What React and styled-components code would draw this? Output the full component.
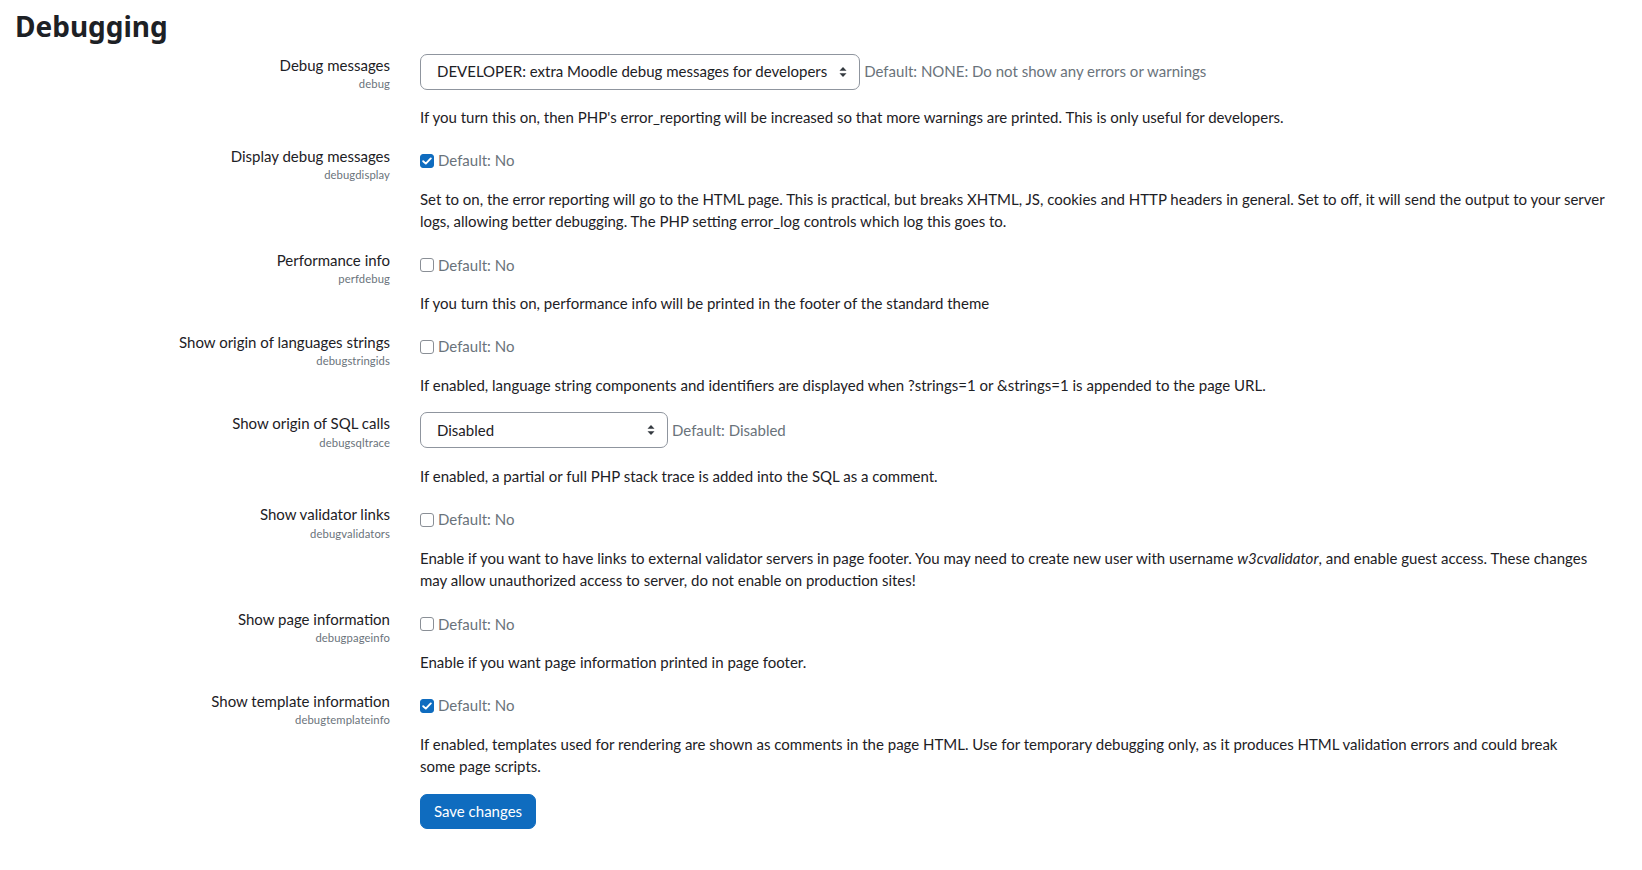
import React from "react";
import styled, { createGlobalStyle } from "styled-components";

const GlobalStyle = createGlobalStyle`
  html, body { margin: 0; padding: 0; background: #ffffff; }
  body {
    font-family: Lato, "Liberation Sans", sans-serif;
    font-size: 15px;
    line-height: 22.5px;
    color: #1d2125;
  }
  * { box-sizing: border-box; }
`;

const Page = styled.main`
  padding: 10px 32px 40px 15px;
`;

const Heading = styled.h2`
  margin: 0 0 10px 0;
  font-family: "Noto Sans", "Open Sans", sans-serif;
  font-weight: 700;
  font-size: 28px;
  line-height: 33.6px;
  color: #1d2125;
`;

const Form = styled.form`
  display: flex;
  flex-direction: column;
  gap: 16px;
`;

const Row = styled.div`
  display: grid;
  grid-template-columns: 375px 1fr;
  column-gap: 30px;
  align-items: start;
`;

const LabelCell = styled.div`
  display: flex;
  flex-direction: column;
  align-items: flex-end;
  text-align: right;
`;

const Label = styled.label`
  font-size: 15px;
  line-height: 22.5px;
  color: #1d2125;
`;

const ShortName = styled.span`
  font-size: 11.25px;
  line-height: 15px;
  color: #6a737b;
  letter-spacing: 0.1px;
`;

const Content = styled.div`
  display: flex;
  flex-direction: column;
  min-width: 0;
`;

const SettingLine = styled.div`
  display: flex;
  align-items: center;
  min-height: 22.5px;
  padding-top: ${(p) => (p.$check ? "4.8px" : "0")};
`;

const SelectBox = styled.div`
  position: relative;
  display: flex;
  align-items: center;
  height: 36px;
  width: ${(p) => (p.$width ? `${p.$width}px` : "auto")};
  padding: 0 32px 0 16px;
  border: 1px solid #8f959e;
  border-radius: 7px;
  background: #ffffff;
  color: #1d2125;
  font-size: 15px;
  white-space: nowrap;
  cursor: pointer;
`;

const Caret = styled.svg`
  position: absolute;
  right: 12px;
  top: 50%;
  transform: translateY(-50%);
`;

const DefaultText = styled.span`
  color: #6a737b;
  margin-left: 4px;
  white-space: nowrap;
`;

const CheckBox = styled.span`
  display: inline-flex;
  align-items: center;
  justify-content: center;
  width: 14px;
  height: 14px;
  border-radius: 3px;
  border: 1.5px solid ${(p) => (p.$checked ? "#0f6cbf" : "#8a8f96")};
  background: ${(p) => (p.$checked ? "#0f6cbf" : "#ffffff")};
  flex: none;
`;

const Description = styled.div`
  margin-top: ${(p) => (p.$afterSelect ? "16.5px" : "16px")};
  max-width: ${(p) => (p.$maxWidth ? `${p.$maxWidth}px` : "none")};
  color: #1d2125;
  font-size: 15px;
  line-height: 22.5px;
`;

const SaveRow = styled.div`
  display: grid;
  grid-template-columns: 375px 1fr;
  column-gap: 30px;
  margin-top: 0;
`;

const SaveButton = styled.button`
  justify-self: start;
  height: 35px;
  padding: 0 13px;
  border: 1px solid #0f6cbf;
  border-radius: 7px;
  background: #0f6cbf;
  color: #ffffff;
  font-family: Lato, "Liberation Sans", sans-serif;
  font-size: 15px;
  line-height: 22.5px;
  cursor: pointer;
`;

function UpDown() {
  return (
    <Caret width="8" height="12" viewBox="0 0 8 12" aria-hidden="true">
      <path d="M4 1 L7.5 4.8 H0.5 Z" fill="#343a40" />
      <path d="M4 11 L7.5 7.2 H0.5 Z" fill="#343a40" />
    </Caret>
  );
}

function Check({ checked }) {
  return (
    <CheckBox $checked={checked}>
      {checked && (
        <svg width="10" height="8" viewBox="0 0 10 8" aria-hidden="true">
          <path d="M1.2 4.2 L3.8 6.6 L8.8 1.4" fill="none" stroke="#ffffff" strokeWidth="1.9" strokeLinecap="round" strokeLinejoin="round" />
        </svg>
      )}
    </CheckBox>
  );
}

const settings = [
  {
    label: "Debug messages",
    short: "debug",
    type: "select",
    value: "DEVELOPER: extra Moodle debug messages for developers",
    def: "Default: NONE: Do not show any errors or warnings",
    desc: "If you turn this on, then PHP's error_reporting will be increased so that more warnings are printed. This is only useful for developers.",
  },
  {
    label: "Display debug messages",
    short: "debugdisplay",
    type: "check",
    checked: true,
    desc: "Set to on, the error reporting will go to the HTML page. This is practical, but breaks XHTML, JS, cookies and HTTP headers in general. Set to off, it will send the output to your server logs, allowing better debugging. The PHP setting error_log controls which log this goes to.",
  },
  {
    label: "Performance info",
    short: "perfdebug",
    type: "check",
    checked: false,
    desc: "If you turn this on, performance info will be printed in the footer of the standard theme",
  },
  {
    label: "Show origin of languages strings",
    short: "debugstringids",
    type: "check",
    checked: false,
    desc: "If enabled, language string components and identifiers are displayed when ?strings=1 or &strings=1 is appended to the page URL.",
  },
  {
    label: "Show origin of SQL calls",
    short: "debugsqltrace",
    type: "select",
    width: 248,
    value: "Disabled",
    def: "Default: Disabled",
    desc: "If enabled, a partial or full PHP stack trace is added into the SQL as a comment.",
  },
  {
    label: "Show validator links",
    short: "debugvalidators",
    type: "check",
    checked: false,
    desc: (
      <>
        Enable if you want to have links to external validator servers in page footer. You may need to create new user with username <em>w3cvalidator</em>, and enable guest access. These changes may allow unauthorized access to server, do not enable on production sites!
      </>
    ),
  },
  {
    label: "Show page information",
    short: "debugpageinfo",
    type: "check",
    checked: false,
    desc: "Enable if you want page information printed in page footer.",
  },
  {
    label: "Show template information",
    short: "debugtemplateinfo",
    type: "check",
    checked: true,
    maxWidth: 1160,
    desc: "If enabled, templates used for rendering are shown as comments in the page HTML. Use for temporary debugging only, as it produces HTML validation errors and could break some page scripts.",
  },
];

export default function App() {
  return (
    <Page>
      <GlobalStyle />
      <Heading>Debugging</Heading>
      <Form onSubmit={(e) => e.preventDefault()}>
        {settings.map((s) => (
          <Row key={s.short}>
            <LabelCell>
              <Label>{s.label}</Label>
              <ShortName>{s.short}</ShortName>
            </LabelCell>
            <Content>
              {s.type === "select" ? (
                <SettingLine>
                  <SelectBox $width={s.width}>
                    {s.value}
                    <UpDown />
                  </SelectBox>
                  <DefaultText>{s.def}</DefaultText>
                </SettingLine>
              ) : (
                <SettingLine $check>
                  <Check checked={s.checked} />
                  <DefaultText>Default: No</DefaultText>
                </SettingLine>
              )}
              <Description $afterSelect={s.type === "select"} $maxWidth={s.maxWidth}>
                {s.desc}
              </Description>
            </Content>
          </Row>
        ))}
        <SaveRow>
          <span />
          <SaveButton type="submit">Save changes</SaveButton>
        </SaveRow>
      </Form>
    </Page>
  );
}
